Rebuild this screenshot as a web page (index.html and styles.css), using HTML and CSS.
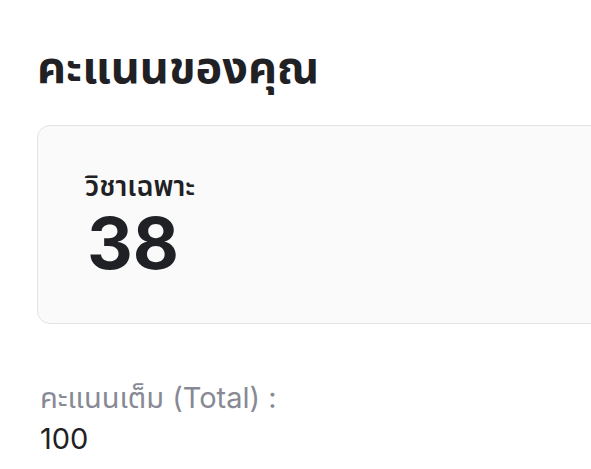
FILE: index.html
```html
<!DOCTYPE html>
<html lang="th">
<head>
<meta charset="utf-8">
<link rel="stylesheet" href="styles.css">
</head>
<body>
<main class="page">
  <h1 class="title">คะแนนของคุณ</h1>
  <section class="card">
    <div class="card-label">วิชาเฉพาะ</div>
    <div class="card-score">38</div>
  </section>
  <div class="total">
    <div class="total-label">คะแนนเต็ม (Total) :</div>
    <div class="total-value">100</div>
  </div>
</main>
</body>
</html>
```
FILE: styles.css
```css
html, body {
  margin: 0;
  padding: 0;
  background: #ffffff;
}
body {
  font-family: Inter, "Noto Sans Thai", "Noto Sans", sans-serif;
  color: #1f2125;
}
.page {
  padding: 41px 0 0 37px;
  width: 640px;
}
.title {
  margin: 0;
  font-size: 45px;
  font-weight: 700;
  line-height: 52px;
}
.card {
  margin-top: 32px;
  width: 600px;
  box-sizing: border-box;
  border: 1px solid #e3e3e6;
  border-radius: 13px;
  background: #fafafa;
  padding: 44px 47px 45px;
}
.card-label {
  font-size: 28px;
  font-weight: 600;
  line-height: 32px;
}
.card-score {
  font-size: 71px;
  font-weight: 700;
  line-height: 70px;
  margin-top: 6px;
  padding-left: 2px;
}
.total {
  margin-top: 56px;
  padding-left: 3px;
}
.total-label {
  font-size: 29px;
  color: #878a94;
  line-height: 36px;
}
.total-value {
  font-size: 29px;
  line-height: 36px;
  margin-top: 5px;
}
```
